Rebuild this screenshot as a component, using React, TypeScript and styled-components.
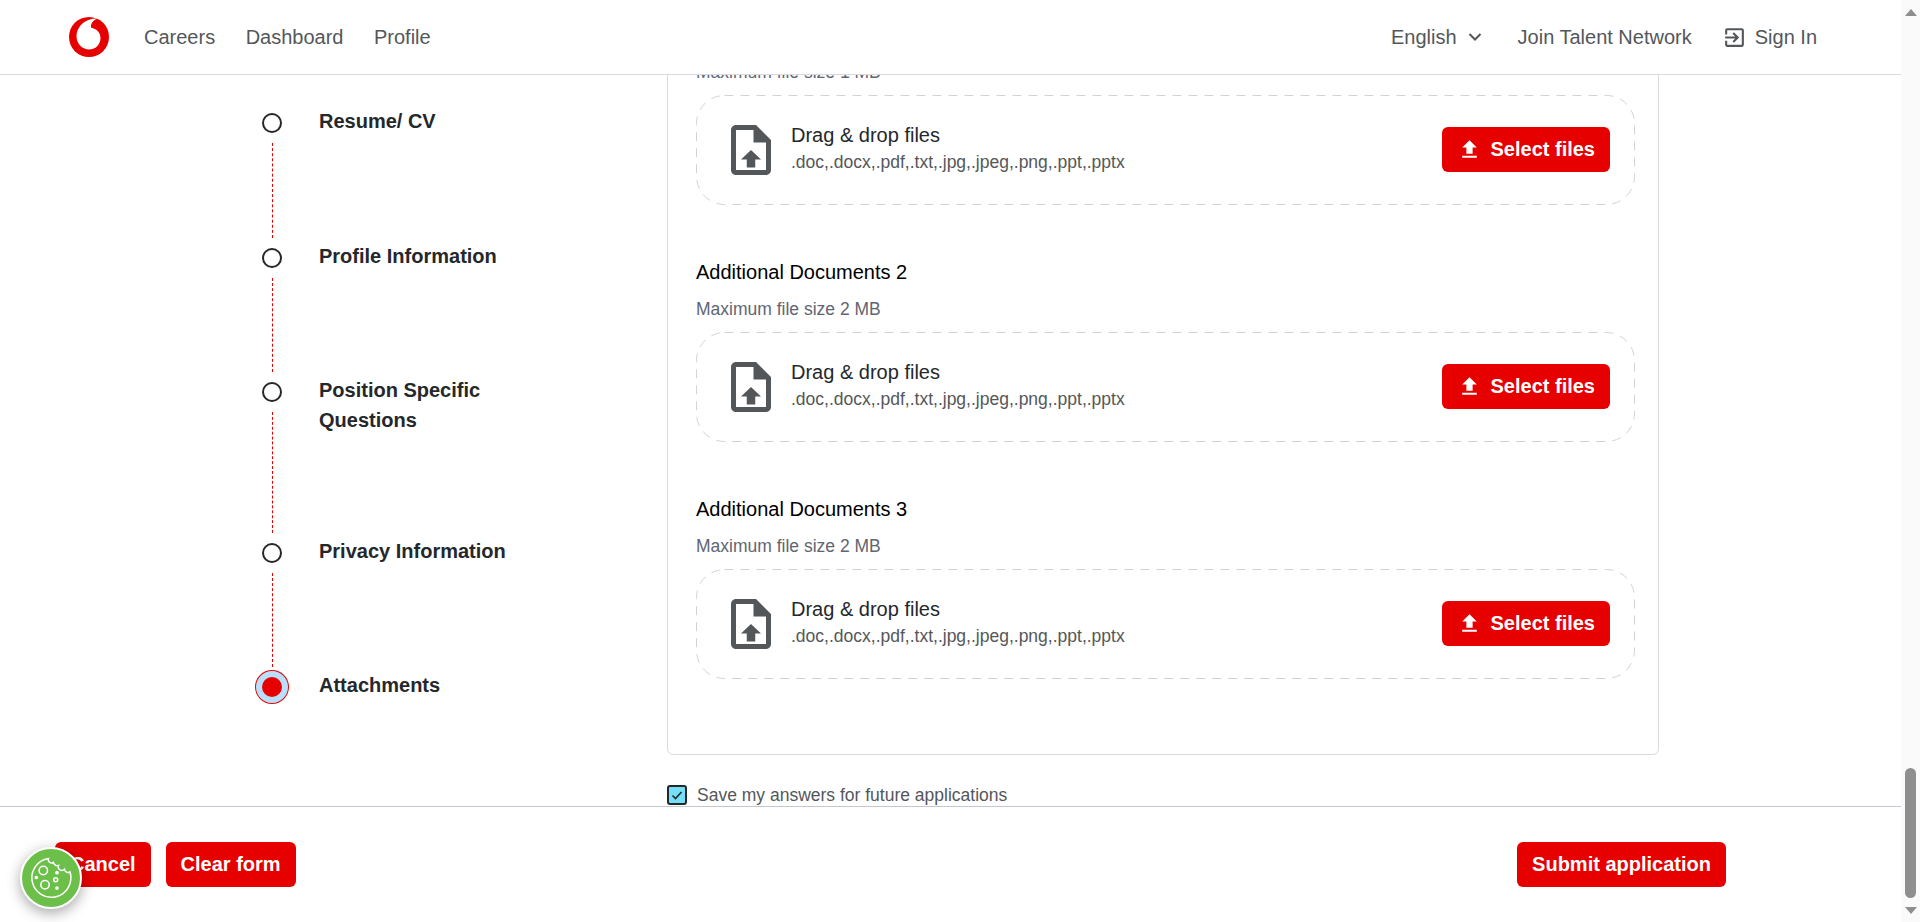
import React from "react";
import styled, { createGlobalStyle } from "styled-components";

const Global = createGlobalStyle`
  html, body { margin: 0; padding: 0; height: 100%; overflow: hidden; background: #fff; }
  body { font-family: "Liberation Sans", Arial, sans-serif; color: #25282b; }
  * { box-sizing: border-box; }
`;

const Shell = styled.div`
  display: flex;
  height: 100vh;
`;
const Page = styled.div`
  flex: 1;
  min-width: 0;
  display: flex;
  flex-direction: column;
`;
const Header = styled.header`
  flex: none;
  height: 75px;
  display: flex;
  align-items: center;
  padding: 0 84px 0 69px;
  border-bottom: 1px solid #d9d9df;
  font-size: 20px;
  color: #54575a;
`;
const LogoMark = styled.svg`
  width: 40px;
  height: 40px;
  margin-right: 35px;
  flex: none;
`;
const NavLink = styled.a<{ $gap?: number }>`
  display: inline-flex;
  align-items: center;
  margin-right: ${(p) => p.$gap ?? 30.5}px;
  color: inherit;
  white-space: nowrap;
`;
const Spacer = styled.div`
  flex: 1;
`;
const Chevron = styled.svg`
  width: 24px;
  height: 24px;
  margin-left: 6px;
`;
const SignIcon = styled.svg`
  width: 25px;
  height: 25px;
  margin-right: 8px;
  fill: #54575a;
`;
const Main = styled.main`
  flex: 1;
  min-height: 0;
  overflow: hidden;
  display: flex;
  align-items: flex-start;
  padding-left: 262px;
`;
const Stepper = styled.nav`
  flex: none;
  width: 405px;
  padding-top: 31px;
`;
const Step = styled.div`
  display: flex;
  min-height: 134.5px;
`;
const Marker = styled.div`
  flex: none;
  width: 20px;
  display: flex;
  flex-direction: column;
  align-items: center;
`;
const Dot = styled.span<{ $active?: boolean }>`
  flex: none;
  width: 20px;
  height: 20px;
  margin-top: 7px;
  border-radius: 50%;
  border: ${(p) => (p.$active ? "none" : "2px solid #25282b")};
  background: ${(p) => (p.$active ? "#e60000" : "#fff")};
  box-shadow: ${(p) => (p.$active ? "0 0 0 6px #b9dffb, 0 0 0 7px #e60000" : "none")};
`;
const Connector = styled.span`
  flex: 1;
  width: 0;
  margin: 10px 0 3px;
  border-left: 1px dashed #e60000;
`;
const StepLabel = styled.div`
  margin-left: 37px;
  max-width: 220px;
  padding-bottom: 100.5px;
  font-size: 20px;
  font-weight: 700;
  line-height: 30px;
  color: #25282b;
`;
const Right = styled.div`
  flex: none;
  width: 992px;
  margin-top: -70px;
`;
const Card = styled.section`
  height: 750px;
  padding: 14px 23px 0 28px;
  border: 1px solid #d9d9df;
  border-radius: 6px;
`;
const Field = styled.div`
  margin-bottom: 52px;
`;
const FieldTitle = styled.div`
  font-size: 20px;
  line-height: 30px;
  color: #000;
`;
const Hint = styled.div`
  margin: 10px 0 11px;
  font-size: 17.5px;
  line-height: 24px;
  color: #5f6672;
`;
const Dropzone = styled.div`
  position: relative;
  height: 110px;
  display: flex;
  align-items: center;
  padding: 0 25px 0 25px;
`;
const DashedOutline = styled.svg`
  position: absolute;
  inset: 0;
  width: 100%;
  height: 100%;
  pointer-events: none;

  rect {
    x: 0.5px;
    y: 0.5px;
    width: calc(100% - 1px);
    height: calc(100% - 1px);
    rx: 28px;
    fill: none;
    stroke: #d2d2da;
    stroke-width: 1;
    stroke-dasharray: 9 7;
  }
`;
const FileIcon = styled.svg`
  flex: none;
  width: 60px;
  height: 60px;
  margin-right: 10px;
`;
const DropText = styled.div`
  flex: 1;
  margin-bottom: 3px;
`;
const DropTitle = styled.div`
  font-size: 20px;
  line-height: 27px;
  color: #25282b;
`;
const DropSub = styled.div`
  font-size: 17.5px;
  line-height: 27px;
  color: #54575a;
`;
const RedButton = styled.button`
  display: inline-flex;
  align-items: center;
  height: 45px;
  padding: 0 15px;
  border: none;
  border-radius: 6px;
  background: #e60000;
  color: #fff;
  font-family: inherit;
  font-size: 20px;
  font-weight: 700;
  white-space: nowrap;
`;
const SelectButton = styled(RedButton)`
  margin-bottom: 1px;
`;
const UploadGlyph = styled.svg`
  width: 25px;
  height: 25px;
  margin-right: 8px;
  fill: #fff;
`;
const SaveRow = styled.label`
  display: flex;
  align-items: center;
  margin-top: 30px;
  font-size: 17.5px;
  line-height: 20px;
  color: #54575a;
`;
const Checkbox = styled.span`
  flex: none;
  width: 20px;
  height: 20px;
  margin-right: 10px;
  display: flex;
  align-items: center;
  justify-content: center;
  border: 2px solid #25282b;
  border-radius: 3px;
  background: #74dff7;
`;
const Footer = styled.footer`
  flex: none;
  height: 116px;
  display: flex;
  align-items: flex-start;
  gap: 15px;
  padding: 35px 175px 0 55px;
  border-top: 1px solid #c4c6d0;
`;
const Scrollbar = styled.div`
  flex: none;
  width: 19px;
  display: flex;
  flex-direction: column;
  align-items: center;
  background: #fafafa;
`;
const ArrowUp = styled.span`
  flex: none;
  margin-top: 9px;
  border-left: 6.5px solid transparent;
  border-right: 6.5px solid transparent;
  border-bottom: 7px solid #8e8e8e;
`;
const Thumb = styled.span`
  flex: none;
  width: 11px;
  height: 130px;
  margin-top: 752px;
  border-radius: 6px;
  background: #8e8e8e;
`;
const ArrowDown = styled.span`
  flex: none;
  margin-top: 9px;
  border-left: 6.5px solid transparent;
  border-right: 6.5px solid transparent;
  border-top: 7px solid #8e8e8e;
`;
const CookieButton = styled.button`
  position: fixed;
  left: 20px;
  bottom: 13px;
  width: 62px;
  height: 62px;
  padding: 0;
  display: flex;
  align-items: center;
  justify-content: center;
  border: 2px solid #fff;
  border-radius: 50%;
  background: #6cc04a;
  box-shadow: 0 4px 14px rgba(0, 0, 0, 0.35);
`;

const steps = ["Resume/ CV", "Profile Information", "Position Specific Questions", "Privacy Information", "Attachments"];
const ACCEPT = ".doc,.docx,.pdf,.txt,.jpg,.jpeg,.png,.ppt,.pptx";
const fields = [
  { title: "Additional Documents 1", hint: "Maximum file size 1 MB" },
  { title: "Additional Documents 2", hint: "Maximum file size 2 MB" },
  { title: "Additional Documents 3", hint: "Maximum file size 2 MB" },
];

const Logo = () => (
  <LogoMark viewBox="0 0 40 40">
    <circle cx="20" cy="20" r="20" fill="#e60000" />
    <path
      fill="#fff"
      d="M20 32.5c-6 0-12.5-5-12.5-13.2 0-5.5 3-10.3 6.5-13.2 3.3-2.8 8.5-4.6 13-4.6.6 0 1.2.1 1.5.2-3.8.8-6.6 4.2-6.6 8.2v.6c6 1.4 9.6 5 9.6 10.8 0 5.6-4.3 11.2-11.5 11.2z"
    />
  </LogoMark>
);

const UploadFile = () => (
  <FileIcon viewBox="0 0 24 24">
    <path
      fill="#54575a"
      d="M14 2H6c-1.1 0-1.99.9-1.99 2L4 20c0 1.1.89 2 1.99 2H18c1.1 0 2-.9 2-2V8l-6-6zm4 18H6V4h7v5h5v11z"
    />
    <path fill="#54575a" d="M12 12l-4 3.8h2.3V19h3.4v-3.2H16z" />
  </FileIcon>
);

const Cookie = () => (
  <svg width="44" height="44" viewBox="0 0 44 44" fill="none" stroke="#fff" strokeWidth="1.5">
    <path d="M19.5 2.5A19.5 19.5 0 1 0 41 16A3.6 3.6 0 0 1 35.5 13.2A3.6 3.6 0 0 1 29.5 9.5A3.8 3.8 0 0 1 24.5 6.5A3.4 3.4 0 0 1 19.5 2.5Z" />
    <circle cx="14.3" cy="14.5" r="4.2" />
    <circle cx="16" cy="28.7" r="4.2" />
    <circle cx="26.7" cy="23.7" r="2" />
    <circle cx="28" cy="16.7" r="1.1" fill="#fff" />
    <circle cx="7.3" cy="21.5" r="1.1" fill="#fff" />
    <circle cx="28" cy="32" r="1.1" fill="#fff" />
  </svg>
);

export default function App() {
  return (
    <Shell>
      <Global />
      <Page>
        <Header>
          <Logo />
          <NavLink>Careers</NavLink>
          <NavLink>Dashboard</NavLink>
          <NavLink>Profile</NavLink>
          <Spacer />
          <NavLink $gap={31}>
            English
            <Chevron viewBox="0 0 24 24" fill="none" stroke="#54575a" strokeWidth="2">
              <path d="M6.5 9l5.5 5.5L17.5 9" />
            </Chevron>
          </NavLink>
          <NavLink $gap={30}>Join Talent Network</NavLink>
          <NavLink $gap={0}>
            <SignIcon viewBox="0 0 24 24">
              <path d="M10.09 15.59L11.5 17l5-5-5-5-1.41 1.41L12.67 11H3v2h9.67l-2.58 2.59zM19 3H5c-1.11 0-2 .9-2 2v4h2V5h14v14H5v-4H3v4c0 1.1.89 2 2 2h14c1.1 0 2-.9 2-2V5c0-1.1-.9-2-2-2z" />
            </SignIcon>
            Sign In
          </NavLink>
        </Header>
        <Main>
          <Stepper>
            {steps.map((s, i) => (
              <Step key={s}>
                <Marker>
                  <Dot $active={i === steps.length - 1} />
                  {i < steps.length - 1 && <Connector />}
                </Marker>
                <StepLabel>{s}</StepLabel>
              </Step>
            ))}
          </Stepper>
          <Right>
            <Card>
              {fields.map((f) => (
                <Field key={f.title}>
                  <FieldTitle>{f.title}</FieldTitle>
                  <Hint>{f.hint}</Hint>
                  <Dropzone>
                    <DashedOutline aria-hidden="true">
                      <rect />
                    </DashedOutline>
                    <UploadFile />
                    <DropText>
                      <DropTitle>Drag &amp; drop files</DropTitle>
                      <DropSub>{ACCEPT}</DropSub>
                    </DropText>
                    <SelectButton>
                      <UploadGlyph viewBox="0 0 24 24">
                        <path d="M9 16h6v-6h4l-7-7-7 7h4v6zm-4 2h14v2H5v-2z" />
                      </UploadGlyph>
                      Select files
                    </SelectButton>
                  </Dropzone>
                </Field>
              ))}
            </Card>
            <SaveRow>
              <Checkbox>
                <svg width="14" height="14" viewBox="0 0 14 14" fill="none" stroke="#25282b" strokeWidth="1.6">
                  <path d="M2.5 7.5l3 3 6-6.5" />
                </svg>
              </Checkbox>
              Save my answers for future applications
            </SaveRow>
          </Right>
        </Main>
        <Footer>
          <RedButton>Cancel</RedButton>
          <RedButton>Clear form</RedButton>
          <Spacer />
          <RedButton>Submit application</RedButton>
        </Footer>
      </Page>
      <Scrollbar>
        <ArrowUp />
        <Thumb />
        <ArrowDown />
      </Scrollbar>
      <CookieButton aria-label="Cookie settings">
        <Cookie />
      </CookieButton>
    </Shell>
  );
}
